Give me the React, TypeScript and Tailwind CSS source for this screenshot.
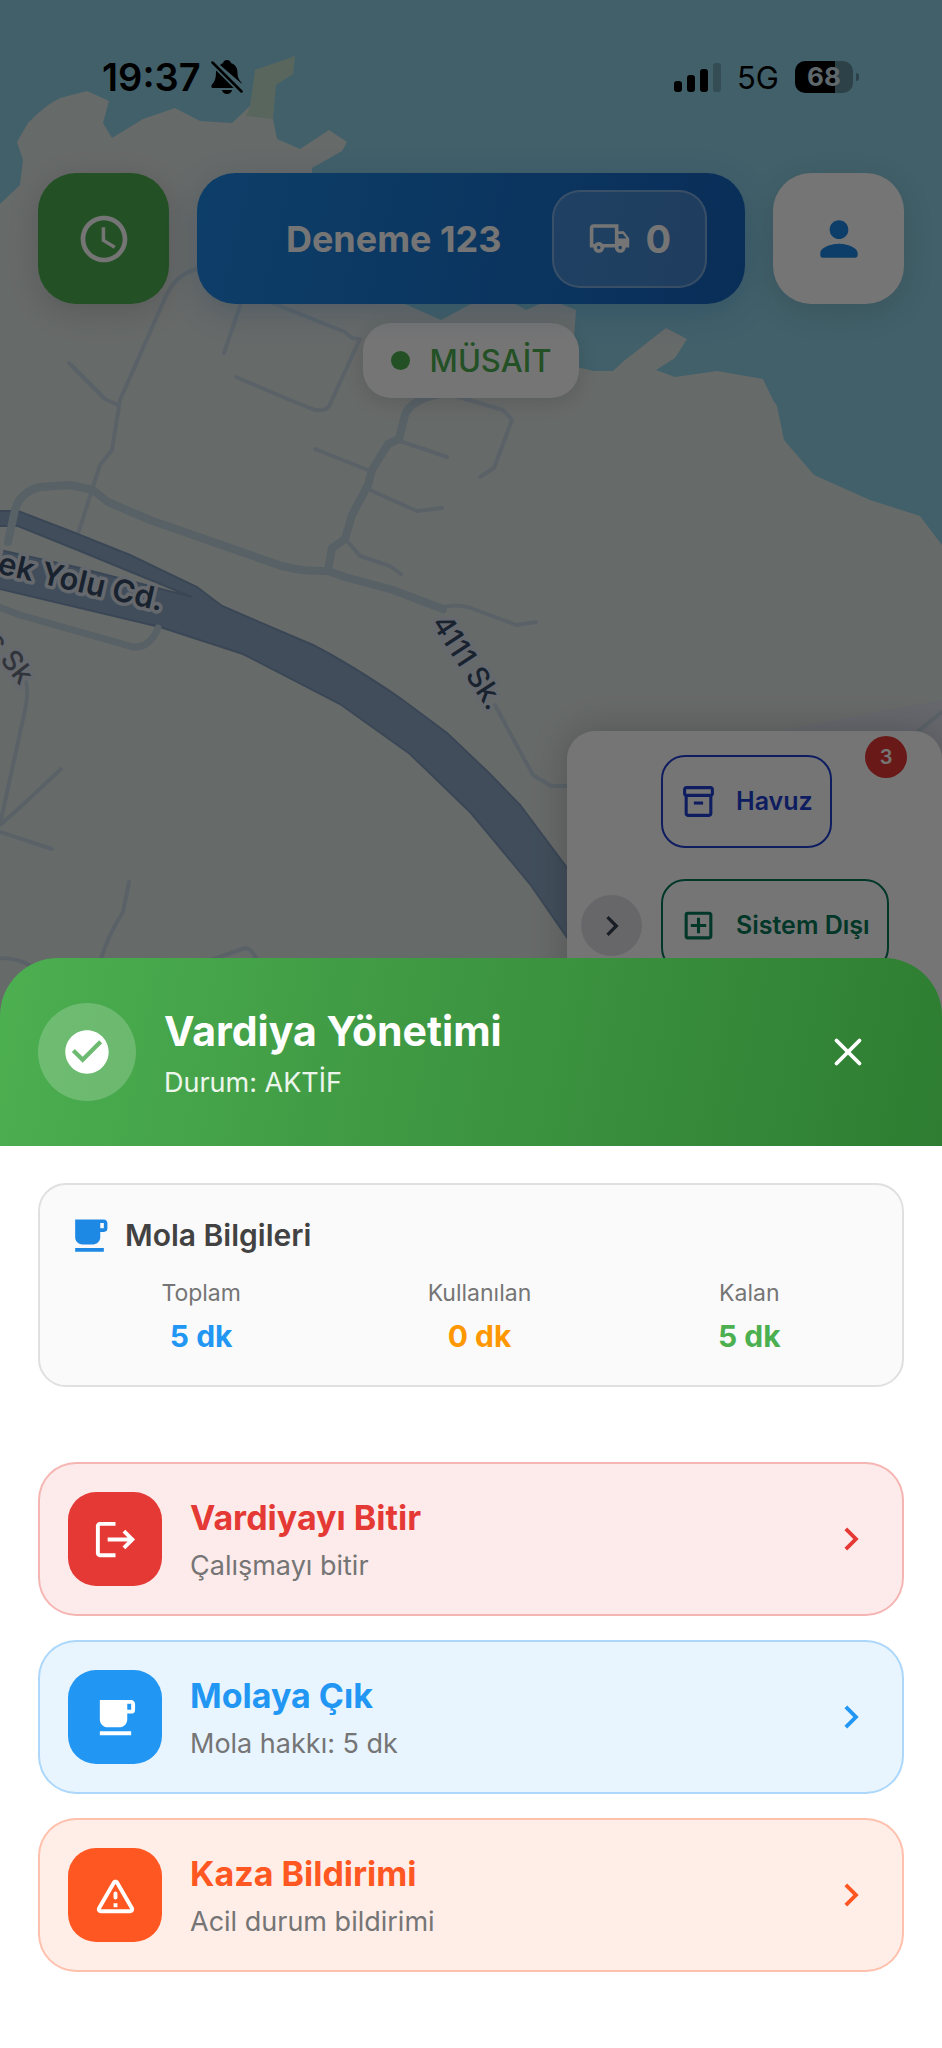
import type { ReactNode } from 'react'
import clsx from 'clsx'
import { X } from 'lucide-react'
import {
  MdCheckCircle,
  MdChevronRight,
  MdFreeBreakfast,
  MdLogout,
  MdOutlineAddBox,
  MdOutlineInventory2,
  MdOutlineLocalShipping,
  MdSchedule,
} from 'react-icons/md'

const BREAK_STATS = [
  { label: 'Toplam', value: '5 dk', color: 'text-[#2196f3]' },
  { label: 'Kullanılan', value: '0 dk', color: 'text-[#ff9800]' },
  { label: 'Kalan', value: '5 dk', color: 'text-[#4caf50]' },
]

const SIDE_STREETS = [
  'M197 269Q176 274 166 296L120 400L112 450L100 465L93 487L76 540',
  'M69 363L105 399L118 405',
  'M242 300L224 353',
  'M265 300L345 332Q352 340 360 339L331 402Q328 412 315 410L290 400L236 377',
  'M455 396L503 410L512 420L494 468L480 477',
  'M315 449L368 470',
  'M400 441L447 457',
  'M370 490L417 511L442 508',
  'M348 542L360 556L390 566L401 574',
  'M440 608Q455 603 471 608L516 625L536 622',
  'M495 705L510 733L533 775L551 786L570 786',
  'M26 682Q29 692 25 710L1 820',
  'M61 769L15 812L0 825',
  'M0 832L52 849',
  'M129 882L123 912Q108 935 100 962',
  'M205 962L245 948Q252 948 258 962',
  'M0 958Q20 958 34 968',
  'M942 712L912 736',
]

function MapView() {
  return (
    <svg
      viewBox="0 0 942 2048"
      preserveAspectRatio="xMidYMin slice"
      className="absolute inset-0 h-full w-full"
      aria-hidden="true"
    >
      <rect width="942" height="2048" fill="#8fd1e6" />
      <path
        fill="#dfe6e4"
        d="M0 204L20 185L23 160L17 142L28 123Q44 106 60 98L87 91L109 101L103 123L112 138L143 119L175 108L200 121L232 123L250 106L273 119L277 139L300 149L329 130L347 142L342 151L312 168L312 180L340 250L405 304L441 320L471 304L515 304L526 310L540 304L561 304L576 310L572 366L594 371L613 371L625 360L666 328L687 339L675 358L656 370L675 377L717 371L763 379L773 400L777 406L784 440L814 475L870 500L920 516L932 532L942 545V2048H0Z"
      />
      <path fill="#c3dfcb" d="M255 70L295 56L293 74L276 85L273 119L246 116L250 106Z" />
      <path fill="#dde1ec" d="M780 731L942 700V760H780Z" />

      <g fill="none" stroke="#c4d6e2" strokeWidth="4" strokeLinecap="round" strokeLinejoin="round">
        {SIDE_STREETS.map(d => (
          <path key={d} d={d} />
        ))}
      </g>

      <path
        fill="#8ea9c5"
        stroke="#7f9ab9"
        strokeWidth="2"
        d="M-4 511H18L70 531L130 555L197 587L222 606L313 645Q350 664 400 698L447 733L489 773L520 805L600 912V985L530 884L471 813L410 754L340 704L243 654L160 627L-4 588V549L80 568L192 597L80 551L18 526H-4Z"
      />
      <g fill="none" stroke="#bed3de" strokeLinecap="round" strokeLinejoin="round">
        <path
          strokeWidth="8"
          d="M8 542L15 510Q20 492 40 487L70 485L93 490L108 502L150 520L270 562Q295 572 328 571L345 577L393 590L443 609"
        />
        <path
          strokeWidth="8"
          d="M440 394Q410 400 405 415L399 439L388 444L372 470L368 485L352 515L345 539L332 548L328 570"
        />
        <path strokeWidth="7" d="M-4 606L20 615L133 647Q150 648 158 628" />
      </g>

      <g
        fontFamily="Inter, 'Noto Sans', sans-serif"
        fill="#374a66"
        stroke="#dde4ee"
        strokeWidth="7"
        strokeLinejoin="round"
        paintOrder="stroke"
      >
        <text fontSize="31" fontWeight="600" textAnchor="end" transform="translate(161 611) rotate(13)">
          dek Yolu Cd.
        </text>
        <text fontSize="29" fontWeight="500" transform="translate(431 623) rotate(57)">
          4111 Sk.
        </text>
        <text fontSize="28" fontWeight="500" fill="#6b7280" textAnchor="end" transform="translate(20 686) rotate(52)">
          c Sk
        </text>
      </g>
    </svg>
  )
}

function StatusBar() {
  return (
    <div className="flex h-[154px] items-center justify-between pr-[83px] pl-[102px] text-black">
      <div className="flex items-center gap-2.5">
        <span className="text-[38px] leading-none font-semibold">19:37</span>
        <svg viewBox="0 0 32 34" className="h-[34px] w-8" role="img" aria-label="Sessiz">
          <path d="M16 0C18 0 19.500 1 20 3C24.500 4.500 26.500 8 26.500 12.500C26.500 17 27.500 19 30 22L31 24L9 5Q10 4 12 3C12.500 1 14 0 16 0Z" />
          <path d="M5 10L25 28H2C0 28 0 26 1 24.500C4 21 5 18 5 12Z" />
          <path d="M11 30H21Q20 34 16 34T11 30Z" />
          <path d="M1 2L31 32" stroke="#8fd1e6" strokeWidth="6" />
          <path d="M1.500 2.500L30.500 31.500" stroke="#000" strokeWidth="2.500" strokeLinecap="round" />
        </svg>
      </div>
      <div className="flex items-center gap-4">
        <div className="flex items-end gap-[5px]">
          <span className="h-[11px] w-2 rounded-[3px] bg-black" />
          <span className="h-[17px] w-2 rounded-[3px] bg-black" />
          <span className="h-[23px] w-2 rounded-[3px] bg-black" />
          <span className="h-[29px] w-2 rounded-[3px] bg-black/20" />
        </div>
        <span className="text-[31px] leading-none">5G</span>
        <div className="flex items-center gap-[3px]">
          <div className="flex h-8 w-[58px] items-center justify-center rounded-[10px] bg-linear-to-r from-black from-69% to-[#618e9d] to-69% text-[26px] leading-none font-bold text-[#cfe2ea]">
            68
          </div>
          <span className="h-2 w-[3px] rounded-r-full bg-[#618e9d]" />
        </div>
      </div>
    </div>
  )
}

function PersonIcon() {
  return (
    <svg viewBox="0 0 24 24" fill="currentColor" className="size-14" aria-hidden="true">
      <path d="M12 12c2.210 0 4-1.790 4-4s-1.790-4-4-4-4 1.790-4 4 1.790 4 4 4zm0 2c-2.670 0-8 1.340-8 4v1c0 .55.45 1 1 1h14c.55 0 1-.45 1-1v-1c0-2.660-5.330-4-8-4z" />
    </svg>
  )
}

function TopBar() {
  return (
    <div className="mt-[19px] flex gap-7 px-[38px]">
      <button
        aria-label="Vardiya"
        className="flex size-[131px] shrink-0 items-center justify-center rounded-[38px] bg-[#4caf50] text-white shadow-[0_8px_32px_rgba(0,0,0,0.14)]"
      >
        <MdSchedule className="size-14" />
      </button>
      <div className="flex h-[131px] min-w-0 flex-1 items-center rounded-[38px] bg-linear-103 from-[#1e88e5] to-[#1565c0] px-[38px] text-white shadow-[0_8px_32px_rgba(21,101,192,0.22)]">
        <span className="flex-1 text-center text-4xl font-bold">Deneme 123</span>
        <div className="flex h-[98px] items-center gap-3.5 rounded-[28px] border-2 border-white/30 bg-white/20 px-[34px]">
          <MdOutlineLocalShipping className="size-[43px]" />
          <span className="text-[38px] leading-none font-bold">0</span>
        </div>
      </div>
      <button
        aria-label="Profil"
        className="flex size-[131px] shrink-0 items-center justify-center rounded-[38px] bg-white text-[#1e88e5] shadow-[0_8px_32px_rgba(0,0,0,0.12)]"
      >
        <PersonIcon />
      </button>
    </div>
  )
}

function QuickPanel() {
  return (
    <div className="absolute top-[731px] right-0 flex h-[389px] w-[375px] items-start rounded-[28px] bg-white px-3.5 py-6 shadow-[0_0_36px_rgba(0,0,0,0.2)]">
      <button
        aria-label="Paneli daralt"
        className="flex size-[61px] shrink-0 items-center justify-center self-center rounded-full bg-[#e0e1e6] text-[#374151]"
      >
        <MdChevronRight className="size-10" />
      </button>
      <div className="ml-[19px] flex flex-col items-start gap-[31px]">
        <button className="flex h-[93px] items-center gap-[19px] rounded-3xl border-2 border-[#1e40d0] px-[17px] text-[25px] font-semibold text-[#1e40d0]">
          <MdOutlineInventory2 className="size-[37px]" />
          Havuz
        </button>
        <button className="flex h-[93px] items-center gap-[19px] rounded-3xl border-2 border-[#047857] px-[17px] text-[25px] font-semibold text-[#047857]">
          <MdOutlineAddBox className="size-[37px]" />
          Sistem Dışı
        </button>
      </div>
      <span className="absolute top-[5px] right-[35px] flex size-[42px] items-center justify-center rounded-full bg-[#e53935] text-xl font-semibold text-white">
        3
      </span>
    </div>
  )
}

function WarningIcon() {
  return (
    <svg viewBox="0 0 24 24" fill="currentColor" className="size-[47px]" aria-hidden="true">
      <path d="M12 5.990L19.530 19H4.470L12 5.990M2.740 18c-.77 1.330.19 3 1.730 3h15.060c1.540 0 2.500-1.670 1.730-3L13.730 4.990c-.77-1.330-2.690-1.330-3.460 0L2.740 18zM11 11v2c0 .55.45 1 1 1s1-.45 1-1v-2c0-.55-.45-1-1-1s-1 .45-1 1zm0 5h2v2h-2z" />
    </svg>
  )
}

interface ActionCardProps {
  title: string
  subtitle: string
  icon: ReactNode
  cardClass: string
  iconClass: string
  textClass: string
}

function ActionCard({ title, subtitle, icon, cardClass, iconClass, textClass }: ActionCardProps) {
  return (
    <button className={clsx('flex w-full items-center rounded-[38px] border-2 p-7 text-left', cardClass)}>
      <span className={clsx('flex size-[94px] shrink-0 items-center justify-center rounded-[28px] text-white', iconClass)}>
        {icon}
      </span>
      <span className="ml-7 flex min-w-0 flex-1 flex-col gap-0.5">
        <span className={clsx('text-[34px] leading-[52px] font-bold', textClass)}>{title}</span>
        <span className="text-[27px] leading-10 text-[#757575]">{subtitle}</span>
      </span>
      <MdChevronRight className={clsx('size-[46px] shrink-0', textClass)} />
    </button>
  )
}

function ShiftSheet() {
  return (
    <div role="dialog" aria-labelledby="shift-title" className="relative">
      <div className="flex items-center rounded-t-[58px] bg-linear-101 from-[#4caf50] to-[#2e7d32] px-[38px] py-[45px] text-white">
        <div className="flex size-[98px] shrink-0 items-center justify-center rounded-full bg-white/20">
          <MdCheckCircle className="size-[52px]" />
        </div>
        <div className="ml-7 flex-1">
          <h2 id="shift-title" className="text-[41px] leading-[56px] font-bold">Vardiya Yönetimi</h2>
          <p className="mt-1.5 text-[27px] leading-9 text-white/90">Durum: AKTİF</p>
        </div>
        <button aria-label="Kapat" className="flex h-[98px] w-28 items-center justify-center">
          <X className="size-[46px]" />
        </button>
      </div>

      <div className="bg-white px-[38px] pt-[37px] pb-[76px]">
        <section className="h-[204px] rounded-[28px] border-2 border-[#e0e0e0] bg-[#fafafa] px-7 pt-7">
          <div className="flex items-center gap-3.5">
            <MdFreeBreakfast className="size-[43px] text-[#1e88e5]" />
            <h3 className="text-[30px] leading-[44px] font-semibold text-[#424242]">Mola Bilgileri</h3>
          </div>
          <dl className="mt-5 flex justify-around text-center">
            {BREAK_STATS.map(({ label, value, color }) => (
              <div key={label}>
                <dt className="text-[23px] leading-8 text-[#757575]">{label}</dt>
                <dd className={clsx('mt-1.5 text-[30px] leading-[42px] font-bold', color)}>{value}</dd>
              </div>
            ))}
          </dl>
        </section>

        <div className="mt-[75px] flex flex-col gap-6">
          <ActionCard
            title="Vardiyayı Bitir"
            subtitle="Çalışmayı bitir"
            icon={<MdLogout className="size-[47px]" />}
            cardClass="border-[#e53935]/30 bg-[#e53935]/10"
            iconClass="bg-[#e53935]"
            textClass="text-[#e53935]"
          />
          <ActionCard
            title="Molaya Çık"
            subtitle="Mola hakkı: 5 dk"
            icon={<MdFreeBreakfast className="size-[47px]" />}
            cardClass="border-[#2196f3]/30 bg-[#2196f3]/10"
            iconClass="bg-[#2196f3]"
            textClass="text-[#2196f3]"
          />
          <ActionCard
            title="Kaza Bildirimi"
            subtitle="Acil durum bildirimi"
            icon={<WarningIcon />}
            cardClass="border-[#ff5722]/30 bg-[#ff5722]/10"
            iconClass="bg-[#ff5722]"
            textClass="text-[#ff5722]"
          />
        </div>
      </div>
    </div>
  )
}

export default function App() {
  return (
    <div className="relative flex min-h-screen flex-col justify-end overflow-hidden font-['Inter','Noto_Sans',sans-serif]">
      <div className="absolute inset-0 overflow-hidden">
        <MapView />
        <div className="relative">
          <StatusBar />
          <TopBar />
          <div className="mx-auto mt-[19px] flex h-[75px] w-fit items-center gap-5 rounded-[28px] bg-white px-7 shadow-[0_4px_20px_rgba(0,0,0,0.12)]">
            <span className="size-[19px] rounded-full bg-[#4caf50]" />
            <span className="text-[31px] leading-none font-medium text-[#4caf50]">MÜSAİT</span>
          </div>
        </div>
        <QuickPanel />
        <div className="absolute inset-0 bg-black/54" />
      </div>
      <ShiftSheet />
    </div>
  )
}
